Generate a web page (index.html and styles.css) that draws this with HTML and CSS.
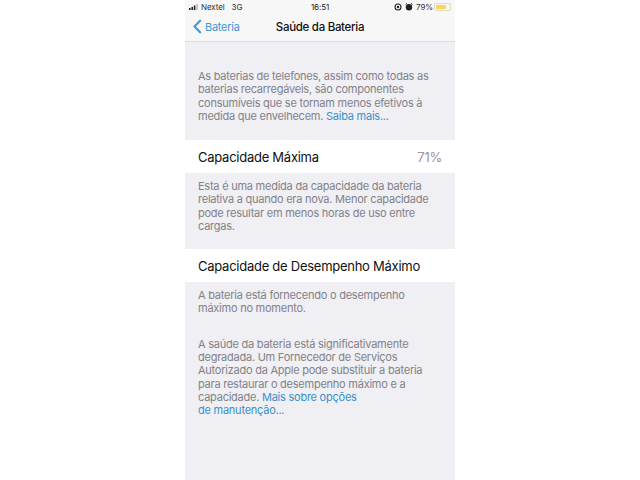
FILE: index.html
```html
<!DOCTYPE html>
<html>
  <head>
    <title>Saúde da Bateria</title>
    <link rel="stylesheet" href="styles.css">
  </head>
  <body>
    <div class="phone">
      <div class="top">
        <div class="status">
          <div class="status-left">
            <svg class="signal" width="10" height="6" viewBox="0 0 10 6">
              <rect x="0" y="4" width="1.6" height="2" fill="#222"/>
              <rect x="2.4" y="3" width="1.6" height="3" fill="#222"/>
              <rect x="4.8" y="1.5" width="1.6" height="4.5" fill="#222"/>
              <rect x="7.2" y="0" width="1.6" height="6" fill="#bbb"/>
            </svg>
            <span class="carrier">Nextel</span>
            <span>3G</span>
          </div>
          <div class="clock">16:51</div>
          <div class="status-right">
            <svg width="8" height="8" viewBox="0 0 8 8">
              <circle cx="4" cy="4" r="3" fill="none" stroke="#222" stroke-width="1.1"/>
              <circle cx="4" cy="4" r="1.2" fill="#222"/>
            </svg>
            <svg class="alarm" width="8" height="8" viewBox="0 0 8 8">
              <circle cx="4" cy="4.3" r="3.2" fill="#222"/>
              <path d="M0.6 1.6 L2 0.4 M7.4 1.6 L6 0.4" stroke="#222" stroke-width="1"/>
            </svg>
            <span class="percent">79%</span>
            <div class="battery"><div class="battery-fill"></div></div>
          </div>
        </div>
        <div class="nav">
          <a class="back">
            <svg width="9" height="15" viewBox="0 0 9 15">
              <path d="M7.8 1 L1.5 7.5 L7.8 14" fill="none" stroke="#3f97d6" stroke-width="2"/>
            </svg>
            <span>Bateria</span>
          </a>
          <div class="nav-title">Saúde da Bateria</div>
        </div>
      </div>

      <p class="note note-intro">As baterias de telefones, assim como todas as<br>baterias recarregáveis, são componentes<br>consumíveis que se tornam menos efetivos à<br>medida que envelhecem. <a class="link">Saiba mais...</a></p>

      <div class="row">
        <span>Capacidade Máxima</span>
        <span class="row-value">71%</span>
      </div>
      <p class="note note-first">Esta é uma medida da capacidade da bateria<br>relativa a quando era nova. Menor capacidade<br>pode resultar em menos horas de uso entre<br>cargas.</p>

      <div class="row row-second">
        <span>Capacidade de Desempenho Máximo</span>
      </div>
      <p class="note note-first">A bateria está fornecendo o desempenho<br>máximo no momento.</p>
      <p class="note note-last">A saúde da bateria está significativamente<br>degradada. Um Fornecedor de Serviços<br>Autorizado da Apple pode substituir a bateria<br>para restaurar o desempenho máximo e a<br>capacidade. <a class="link">Mais sobre opções<br>de manutenção...</a></p>
    </div>
  </body>
</html>
```

FILE: styles.css
```css
html, body {
  margin: 0;
  height: 100%;
  background-color: #fff;
}

body {
  display: flex;
  justify-content: center;
  overflow: hidden;
  font-family: Inter, "Liberation Sans", sans-serif;
}

.phone {
  width: 270px;
  height: 480px;
  background-color: #efeff4;
  overflow: hidden;
}

/* status bar + nav */
.top {
  height: 41px;
  background-color: #f7f7f8;
  border-bottom: 1px solid #dcdce0;
}

.status {
  height: 13px;
  padding: 0 4px 0 4px;
  display: flex;
  align-items: center;
  justify-content: space-between;
  position: relative;
  font-size: 8px;
  letter-spacing: -0.1px;
  color: #333;
}

.status-left,
.status-right {
  display: flex;
  align-items: center;
}

.carrier {
  margin: 0 7px 0 2px;
}

.clock {
  position: absolute;
  left: 0;
  right: 0;
  text-align: center;
  color: #222;
}

.alarm {
  margin-left: 3px;
}

.percent {
  margin-left: 3px;
}

.battery {
  margin-left: 1px;
  padding: 1px;
  border: 1px solid #e8dcb8;
  border-radius: 2px;
  width: 13px;
  height: 4px;
}

.battery-fill {
  width: 79%;
  height: 100%;
  background-color: #f9d35f;
  border-radius: 1px;
}

.nav {
  height: 28px;
  display: flex;
  align-items: center;
  justify-content: center;
  position: relative;
}

.back {
  position: absolute;
  left: 8px;
  top: 6px;
  display: flex;
  align-items: center;
  gap: 3px;
  font-size: 11px;
  letter-spacing: -0.25px;
  color: #3f97d6;
}

.nav-title {
  font-size: 11.5px;
  font-weight: 500;
  letter-spacing: -0.3px;
  color: #111;
}

/* text blocks */
.note {
  margin: 0;
  padding: 0 13px;
  font-size: 11px;
  letter-spacing: -0.24px;
  line-height: 13.3px;
  color: #828288;
  white-space: nowrap;
}

.note-intro {
  padding-top: 28px;
  height: 70px;
}

.note-first {
  padding-top: 7px;
}

.note-last {
  padding-top: 22px;
}

.link {
  color: #3a8fcf;
}

.row {
  height: 33px;
  padding: 0 13px;
  display: flex;
  align-items: center;
  justify-content: space-between;
  background-color: #fff;
  font-size: 13px;
  letter-spacing: -0.26px;
  color: #111;
}

.row-second {
  margin-top: 16px;
}

.row-value {
  color: #97979b;
}
```
